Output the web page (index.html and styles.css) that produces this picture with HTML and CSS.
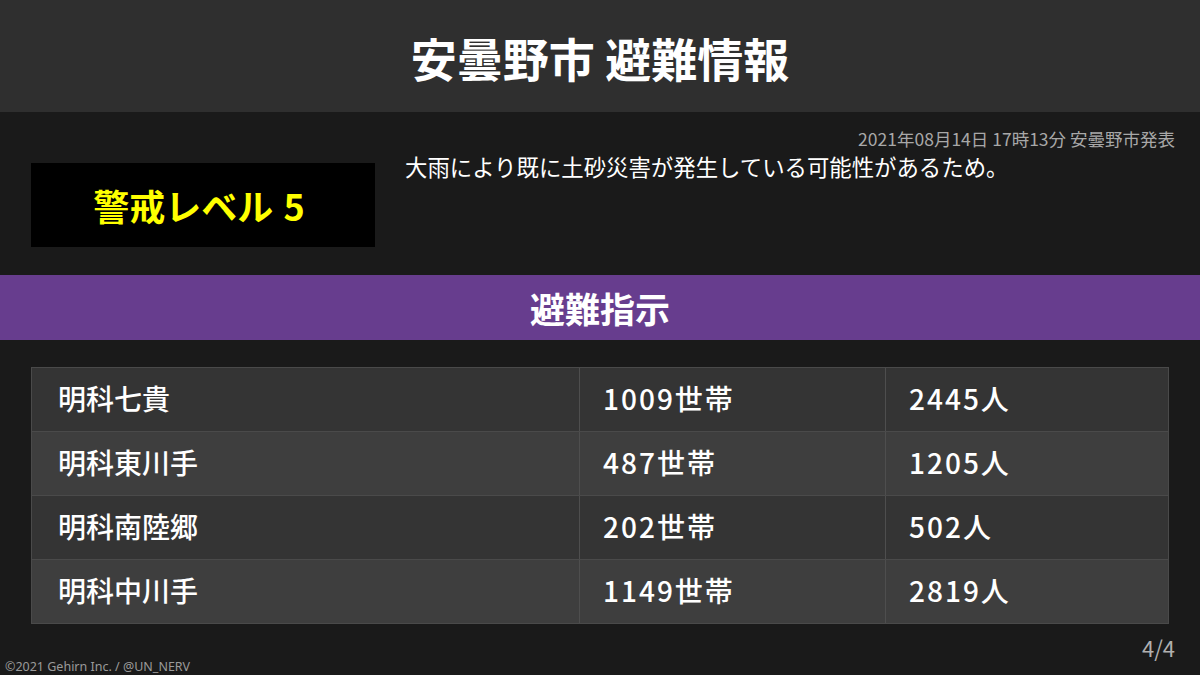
FILE: index.html
```html
<!DOCTYPE html>
<html lang="ja">
<head>
    <meta charset="UTF-8">
    <title>安曇野市 避難情報</title>
    <link rel="stylesheet" href="styles.css">
</head>
<body>
    <header class="top">
        <h1 class="site-title">安曇野市 避難情報</h1>
    </header>

    <section class="alert">
        <div class="level">警戒レベル 5</div>
        <div class="info">
            <p class="issued">2021年08月14日 17時13分 安曇野市発表</p>
            <p class="reason">大雨により既に土砂災害が発生している可能性があるため。</p>
        </div>
    </section>

    <div class="band">
        <h2>避難指示</h2>
    </div>

    <div class="areas">
        <div class="row">
            <div class="cell">明科七貴</div>
            <div class="cell num">1009世帯</div>
            <div class="cell num">2445人</div>
        </div>
        <div class="row">
            <div class="cell">明科東川手</div>
            <div class="cell num">487世帯</div>
            <div class="cell num">1205人</div>
        </div>
        <div class="row">
            <div class="cell">明科南陸郷</div>
            <div class="cell num">202世帯</div>
            <div class="cell num">502人</div>
        </div>
        <div class="row">
            <div class="cell">明科中川手</div>
            <div class="cell num">1149世帯</div>
            <div class="cell num">2819人</div>
        </div>
    </div>

    <footer>
        <p class="page">4/4</p>
        <p class="copy">&copy;2021 Gehirn Inc. / @UN_NERV</p>
    </footer>
</body>
</html>
```

FILE: styles.css
```css
/* Базовые стили страницы */
body {
  margin: 0;
  width: 1200px;
  height: 675px;
  overflow: hidden;
  background-color: #1a1a1a;
  color: #fff;
  font-family: "Noto Sans CJK JP", "Noto Sans", sans-serif;
}

p, h1, h2 {
  margin: 0;
}

/* Заголовок */
.top {
  height: 112px;
  background-color: #2f2f2f;
  display: flex;
  align-items: center;
  justify-content: center;
}

.site-title {
  font-size: 46px;
  font-weight: 700;
  line-height: 1;
  margin-top: 2px;
}

/* Блок уровня тревоги */
.alert {
  height: 163px;
  display: flex;
  align-items: flex-start;
  padding: 0 25px 0 31px;
  box-sizing: border-box;
}

.level {
  width: 344px;
  height: 84px;
  margin-top: 51px;
  background-color: #000;
  color: #ffff00;
  font-size: 36px;
  font-weight: 700;
  word-spacing: 2px;
  display: flex;
  align-items: center;
  justify-content: center;
  padding-right: 8px;
  box-sizing: border-box;
}

.info {
  flex: 1;
  margin-left: 30px;
  padding-top: 16px;
}

.issued {
  text-align: right;
  font-size: 17.5px;
  line-height: 21px;
  color: #a8a8a8;
}

.reason {
  font-size: 22.4px;
  line-height: 28px;
  margin-top: 3px;
}

/* Фиолетовая полоса */
.band {
  height: 65px;
  background-color: #673d8e;
  display: flex;
  align-items: center;
  justify-content: center;
}

.band h2 {
  font-size: 35px;
  font-weight: 700;
  line-height: 1;
}

/* Таблица районов */
.areas {
  margin: 27px 31px 0;
  border: 1px solid #4a4a4a;
}

.row {
  display: grid;
  grid-template-columns: 547px 306px 1fr;
  height: 63px;
  background-color: #343434;
}

.row:nth-child(even) {
  background-color: #3e3e3e;
}

.row + .row {
  border-top: 1px solid #4a4a4a;
}

.cell {
  display: flex;
  align-items: center;
  padding-left: 23px;
  padding-bottom: 3px;
  font-size: 28px;
  font-weight: 500;
}

.cell:first-child {
  padding-left: 26px;
}

.cell + .cell {
  border-left: 1px solid #4e4e4e;
}

.num {
  letter-spacing: 2px;
}

/* Подвал */
footer {
  display: flex;
  flex-direction: column;
}

.page {
  align-self: flex-end;
  margin: 11px 25px 0 0;
  font-size: 22px;
  line-height: 24px;
  color: #b0b0b0;
}

.copy {
  margin: 1px 0 0 5px;
  font-size: 12.5px;
  line-height: 14px;
  color: #9a9a9a;
  font-family: "Noto Sans", sans-serif;
}
```
